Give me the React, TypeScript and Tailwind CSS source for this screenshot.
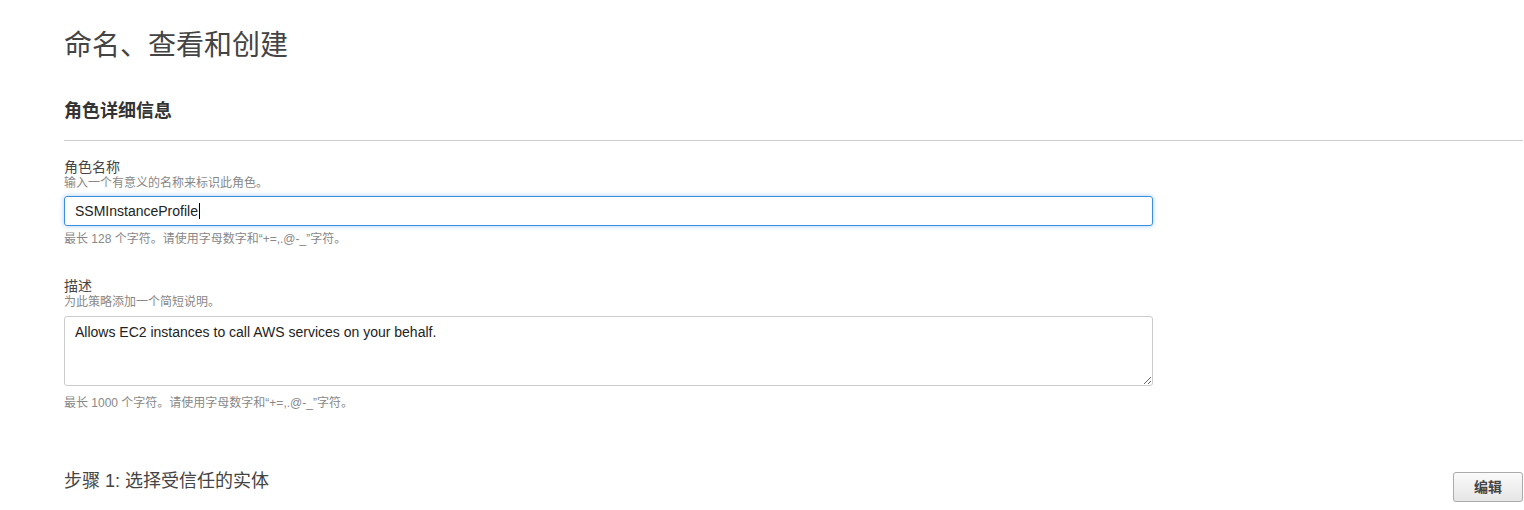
import React from "react";

const font = {
  fontFamily:
    '"Liberation Sans", Arial, "Noto Sans CJK SC", "Microsoft YaHei", sans-serif',
};

export default function App() {
  return (
    <div className="min-h-[510px] bg-white pl-[64px] pr-[1px] text-[#444]" style={font}>
      <h1 className="pt-[30px] text-[28px] leading-[32px] font-normal text-[#444]">
        命名、查看和创建
      </h1>

      <div className="mt-[37px] border-b border-[#ccc] pb-[17px]">
        <h2 className="text-[18px] leading-[24px] font-bold text-[#333]">
          角色详细信息
        </h2>
      </div>

      <div className="mt-[17.5px] w-[1089px]">
        <label className="block text-[14px] leading-[17px] text-[#444]">角色名称</label>
        <p className="text-[12px] leading-[15px] text-[#888]">
          输入一个有意义的名称来标识此角色。
        </p>
        <div className="mt-[5.5px] flex h-[30px] items-center rounded-[3px] border border-[#3b8de0] pl-[10px] text-[14px] text-[#222] shadow-[0_0_5px_rgba(59,141,224,0.45)]">
          <span>SSMInstanceProfile</span>
          <span className="ml-px h-[16px] w-px bg-black" />
        </div>
        <p className="mt-[5.5px] text-[12px] leading-[15px] text-[#888]">
          最长 128 个字符。请使用字母数字和“+=,.@-_”字符。
        </p>

        <label className="mt-[31.5px] block text-[14px] leading-[17px] text-[#444]">描述</label>
        <p className="text-[12px] leading-[15px] text-[#888]">为此策略添加一个简短说明。</p>
        <textarea
          className="mt-[6px] block h-[70px] w-full rounded-[3px] border border-[#ccc] px-[10px] py-[6px] text-[14px] leading-[18px] text-[#222] outline-none"
          style={font}
          defaultValue="Allows EC2 instances to call AWS services on your behalf."
        />
        <p className="mt-[9.5px] text-[12px] leading-[15px] text-[#888]">
          最长 1000 个字符。请使用字母数字和“+=,.@-_”字符。
        </p>
      </div>

      <div className="mt-[58.5px] flex items-start justify-between">
        <h3 className="text-[18px] leading-[24px] font-normal text-[#444]">
          步骤 1: 选择受信任的实体
        </h3>
        <button className="mt-[3px] h-[30px] w-[70px] rounded-[3px] border border-[#aaa] bg-gradient-to-b from-[#fafafa] to-[#e6e6e6] text-[14px] font-bold text-[#444]">
          编辑
        </button>
      </div>
    </div>
  );
}
